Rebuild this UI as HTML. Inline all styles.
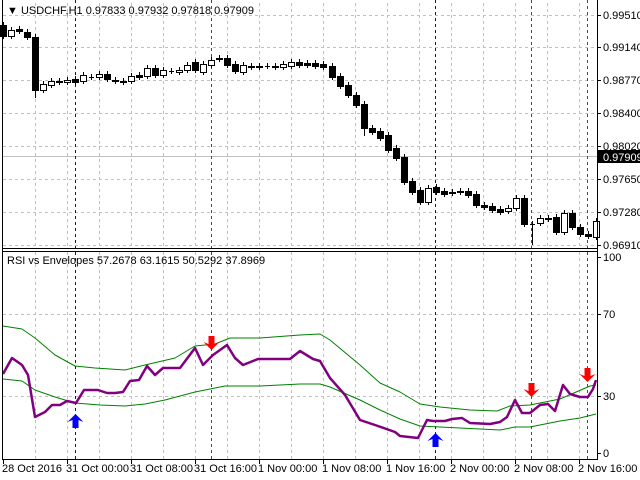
<!DOCTYPE html>
<html><head><meta charset="utf-8"><style>
html,body{margin:0;padding:0;background:#fff;width:640px;height:480px;overflow:hidden}
svg{display:block}
text{font-family:"Liberation Sans",sans-serif;font-size:11px;fill:#000}
</style></head><body>
<svg id="s" width="640" height="480" xmlns="http://www.w3.org/2000/svg">
<g id="grid" stroke="#c0c0c0" stroke-dasharray="3,3" stroke-width="1"></g>
<line x1="3" y1="156.5" x2="597" y2="156.5" stroke="#c0c0c0"/>
<g id="hl" stroke-dasharray="3,3" stroke-width="1"></g>
<g id="candles"></g>
<g id="ind" fill="none"></g>
<g id="axes"></g>
<text x="7" y="14">&#9660; USDCHF,H1 0.97833 0.97932 0.97818 0.97909</text>
<text x="7" y="264">RSI vs Envelopes 57.2678 63.1615 50.5292 37.8969</text>
</svg>
<script>
var NS="http://www.w3.org/2000/svg";
function el(p,t,a){var e=document.createElementNS(NS,t);for(var k in a)e.setAttribute(k,a[k]);p.appendChild(e);return e;}
var g=document.getElementById('grid');
for(var x=35;x<597;x+=32){el(g,'line',{x1:x+.5,y1:3,x2:x+.5,y2:248});el(g,'line',{x1:x+.5,y1:252,x2:x+.5,y2:459});}
[15,47,80,113,146,179,212,245].forEach(function(y){el(g,'line',{x1:3,y1:y+.5,x2:597,y2:y+.5});});
[314,396].forEach(function(y){el(g,'line',{x1:3,y1:y+.5,x2:597,y2:y+.5});});
var hl=document.getElementById('hl');
[[75,'#0000ff'],[211,'#ff0000'],[435,'#0000ff'],[531,'#ff0000'],[587,'#ff0000']].forEach(function(a){
 el(hl,'line',{x1:a[0]+.5,y1:0,x2:a[0]+.5,y2:248,stroke:a[1]});el(hl,'line',{x1:a[0]+.5,y1:252,x2:a[0]+.5,y2:459,stroke:a[1]});});
// candles [x, open, close]
var C=[[3,25,36],[11,36,30],[19,29,31],[27,32,37],[35,37,90],[43,90,84],[51,85,81],[59,81,82],[67,82,80],[75,79,82],[83,81,75],[91,77,77],[99,77,74],[107,74,79],[115,80,81],[123,81,82],[131,81,76],[139,75,77],[147,76,68],[155,68,75],[163,75,70],[171,71,71],[179,72,70],[187,70,65],[195,62,70],[203,72,64],[211,65,60],[219,58,59],[227,58,65],[235,64,71],[243,72,65],[251,66,67],[259,66,67],[267,66,66],[275,66,67],[283,67,64],[291,66,62],[299,62,65],[307,63,65],[315,63,66],[323,64,67],[332,66,77],[340,76,86],[348,85,95],[356,95,105],[364,104,128],[372,128,132],[380,131,138],[388,135,150],[396,148,158],[404,157,182],[412,181,192],[420,190,202],[428,202,188],[436,187,192],[444,191,194],[452,192,193],[460,191,192],[468,191,195],[476,194,205],[484,205,207],[492,206,210],[500,209,212],[508,211,208],[516,208,198],[524,198,224],[532,224,224],[540,223,218],[548,218,219],[556,217,232],[564,232,213],[572,213,227],[580,227,234],[588,234,236],[596,237,221]];
var cg=document.getElementById('candles');
C.forEach(function(c){var x=c[0],o=c[1],cl=c[2],t=Math.min(o,cl),b=Math.max(o,cl);
 var hi=t-3,lo=b+3;if(x==532){lo=245;} if(x==364)lo=136;if(x==35)lo=98;
 el(cg,'line',{x1:x+.5,y1:hi,x2:x+.5,y2:lo,stroke:'#000'});
 if(b-t<1){el(cg,'line',{x1:x-2,y1:t+.5,x2:x+3,y2:t+.5,stroke:'#000'});}
 else el(cg,'rect',{x:x-2.5,y:t+.5,width:6,height:b-t,fill:cl>o?'#000':'#fff',stroke:'#000'});});
var ind=document.getElementById('ind');
function pl(pts,col,w){el(ind,'polyline',{points:pts.map(function(p){return p.join(',')}).join(' '),stroke:col,'stroke-width':w,'stroke-linejoin':'round'});}
pl([[3,326],[22,329],[35,338],[55,355],[75,366],[95,368],[125,370],[145,365],[175,358],[195,346],[215,344],[230,338],[260,338],[300,335],[320,334],[330,340],[360,365],[380,383],[400,392],[420,404],[440,407],[470,410],[497,411],[510,406],[530,405],[560,399],[590,386],[596,385]],'#008000',1);
pl([[3,379],[22,381],[35,390],[55,397],[75,403],[100,405],[125,406],[145,404],[165,400],[195,392],[225,386],[260,386],[300,384],[320,384],[330,387],[360,400],[380,410],[400,419],[420,426],[440,427],[480,429],[500,430],[515,427],[530,427],[560,421],[580,418],[596,414]],'#008000',1);
pl([[3,374],[12,358],[22,365],[28,375],[35,417],[45,412],[52,405],[60,405],[67,401],[76,403],[84,390],[98,390],[107,393],[115,393],[123,392],[130,381],[139,380],[147,366],[155,375],[163,368],[180,368],[195,348],[203,365],[213,355],[227,345],[235,358],[243,365],[258,359],[290,359],[300,351],[313,359],[320,361],[330,378],[345,395],[360,420],[375,425],[395,432],[400,436],[418,438],[427,420],[433,421],[445,421],[452,419],[462,418],[470,423],[490,424],[500,422],[507,417],[515,400],[522,413],[530,413],[540,405],[548,404],[555,411],[563,385],[570,394],[580,397],[588,397],[593,389],[596,380]],'#800080',2.5);
function arrow(x,y,up,col){ // y = tip
 var d=up?[[x,y],[x+8,y+8],[x+3,y+6],[x+3,y+14],[x-3,y+14],[x-3,y+6],[x-8,y+8]]:[[x,y],[x+8,y-8],[x+3,y-6],[x+3,y-14],[x-3,y-14],[x-3,y-6],[x-8,y-8]];
 el(ind,'polygon',{points:d.map(function(p){return p.join(',')}).join(' '),fill:col});}
arrow(75.5,414,true,'#0000ff');arrow(435.5,433,true,'#0000ff');
arrow(211.5,350,false,'#ff0000');arrow(531.5,397,false,'#ff0000');arrow(587.5,382,false,'#ff0000');
var ax=document.getElementById('axes');
el(ax,'line',{x1:2.5,y1:0,x2:2.5,y2:460,stroke:'#000'});
el(ax,'line',{x1:597.5,y1:0,x2:597.5,y2:460,stroke:'#000'});
el(ax,'line',{x1:2,y1:248.5,x2:598,y2:248.5,stroke:'#000'});
el(ax,'line',{x1:2,y1:251.5,x2:598,y2:251.5,stroke:'#000'});
el(ax,'line',{x1:2,y1:459.5,x2:598,y2:459.5,stroke:'#000'});
[['0.99510',15],['0.99140',47],['0.98770',80],['0.98400',113],['0.98020',146],['0.97650',179],['0.97280',212],['0.96910',245]].forEach(function(a){
 el(ax,'line',{x1:597,y1:a[1]+.5,x2:601,y2:a[1]+.5,stroke:'#000'});var t=el(ax,'text',{x:603,y:a[1]+4});t.textContent=a[0];});
el(ax,'rect',{x:598,y:150,width:42,height:13,fill:'#000'});
var t=el(ax,'text',{x:603,y:161,fill:'#fff',style:'fill:#fff'});t.textContent='0.97909';
[['100',257],['70',314],['30',396],['0',453]].forEach(function(a){
 el(ax,'line',{x1:597,y1:a[1]+.5,x2:601,y2:a[1]+.5,stroke:'#000'});var t=el(ax,'text',{x:603,y:a[1]+4});t.textContent=a[0];});
[['28 Oct 2016',3],['31 Oct 00:00',67],['31 Oct 08:00',131],['31 Oct 16:00',195],['1 Nov 00:00',259],['1 Nov 08:00',323],['1 Nov 16:00',387],['2 Nov 00:00',451],['2 Nov 08:00',515],['2 Nov 16:00',579]].forEach(function(a){
 el(ax,'line',{x1:a[1]+.5,y1:459,x2:a[1]+.5,y2:464,stroke:'#000'});var t=el(ax,'text',{x:a[1]-1,y:472});t.textContent=a[0];});
</script>
</body></html>
